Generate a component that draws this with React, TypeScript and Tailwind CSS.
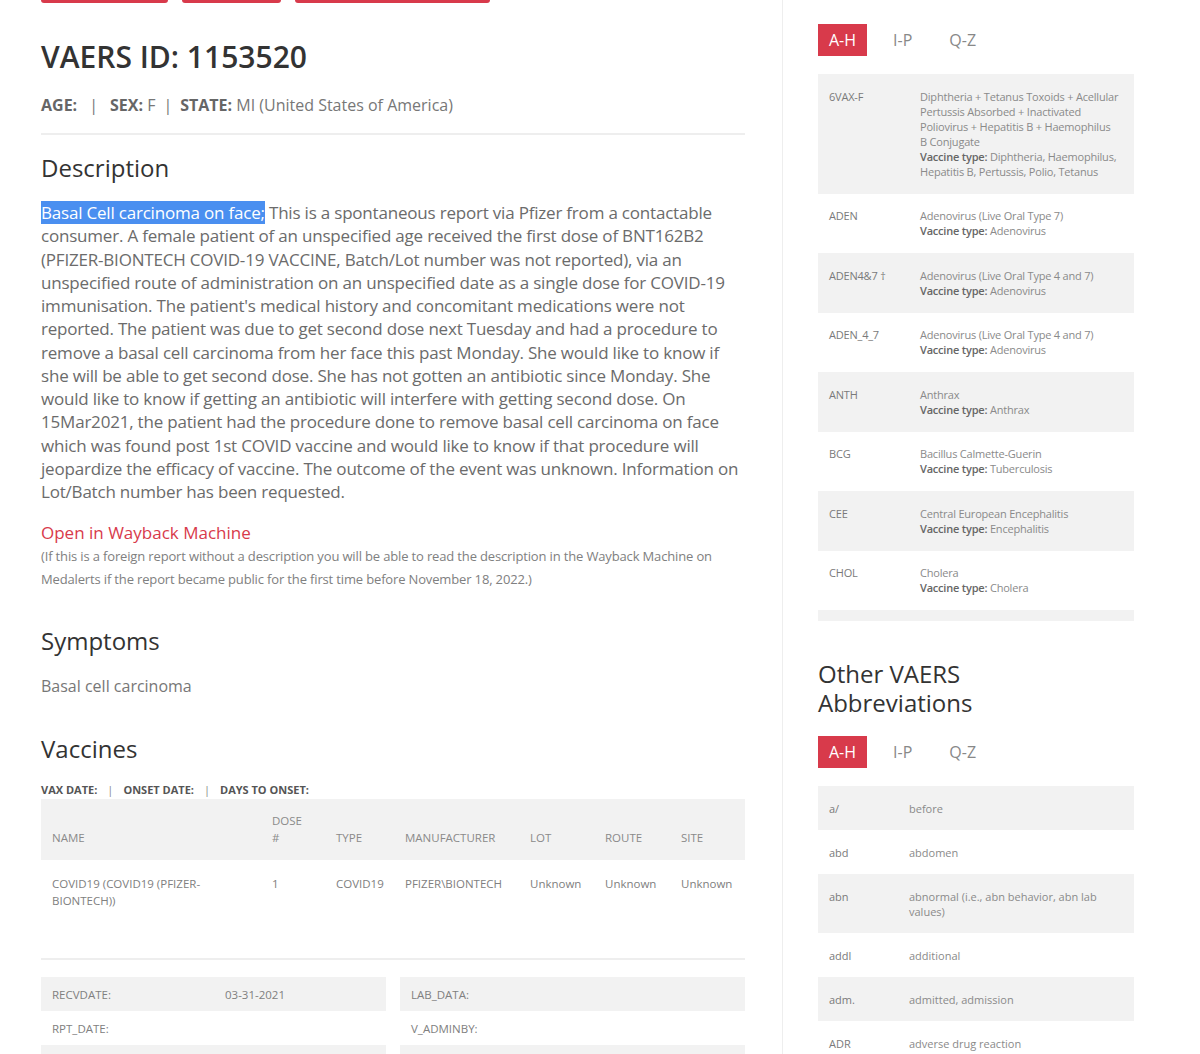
import React from "react";

const vaccineAbbr = [
  {
    code: "6VAX-F",
    name: "Diphtheria + Tetanus Toxoids + Acellular Pertussis Absorbed + Inactivated Poliovirus + Hepatitis B + Haemophilus B Conjugate",
    type: "Diphtheria, Haemophilus, Hepatitis B, Pertussis, Polio, Tetanus",
  },
  { code: "ADEN", name: "Adenovirus (Live Oral Type 7)", type: "Adenovirus" },
  { code: "ADEN4&7 †", name: "Adenovirus (Live Oral Type 4 and 7)", type: "Adenovirus" },
  { code: "ADEN_4_7", name: "Adenovirus (Live Oral Type 4 and 7)", type: "Adenovirus" },
  { code: "ANTH", name: "Anthrax", type: "Anthrax" },
  { code: "BCG", name: "Bacillus Calmette-Guerin", type: "Tuberculosis" },
  { code: "CEE", name: "Central European Encephalitis", type: "Encephalitis" },
  { code: "CHOL", name: "Cholera", type: "Cholera" },
  { code: "DF", name: "Dengue Fever", type: "Dengue" },
];

const otherAbbr = [
  { code: "a/", meaning: "before" },
  { code: "abd", meaning: "abdomen" },
  { code: "abn", meaning: "abnormal (i.e., abn behavior, abn lab values)" },
  { code: "addl", meaning: "additional" },
  { code: "adm.", meaning: "admitted, admission" },
  { code: "ADR", meaning: "adverse drug reaction" },
  { code: "AE", meaning: "adverse event" },
];

const fieldsLeft = [
  { label: "RECVDATE:", value: "03-31-2021" },
  { label: "RPT_DATE:", value: "" },
  { label: "DATEDIED:", value: "" },
];

const fieldsRight = [
  { label: "LAB_DATA:", value: "" },
  { label: "V_ADMINBY:", value: "" },
  { label: "V_FUNDBY:", value: "" },
];

function Tabs() {
  return (
    <div className="flex gap-[15px] h-[32px]">
      <button type="button" className="px-[11px] h-[32px] text-[16px] text-white bg-[#d83a4b]">
        A-H
      </button>
      <button type="button" className="px-[11px] h-[32px] text-[16px] text-[#888]">
        I-P
      </button>
      <button type="button" className="px-[11px] h-[32px] text-[16px] text-[#888]">
        Q-Z
      </button>
    </div>
  );
}

export default function App() {
  return (
    <div
      className="flex bg-white min-h-[1054px] overflow-hidden"
      style={{ fontFamily: '"Open Sans", "Liberation Sans", sans-serif' }}
    >
      {/* Main report */}
      <div className="w-[782px] shrink-0 pl-[41px] pr-[37px]">
        <div className="flex gap-[14px] h-[3px]">
          <div className="w-[127px] bg-[#d83a4b] rounded-b-[3px]" />
          <div className="w-[99px] bg-[#d83a4b] rounded-b-[3px]" />
          <div className="w-[195px] bg-[#d83a4b] rounded-b-[3px]" />
        </div>

        <h1 className="mt-[36px] text-[30px] leading-[36px] font-semibold text-[#333]">
          VAERS ID: 1153520
        </h1>
        <p className="mt-[18px] text-[16px] leading-[24px] text-[#777]">
          <b className="font-bold text-[#666]">AGE:</b>
          <span className="mx-[12px]">|</span>
          <b className="font-bold text-[#666]">SEX:</b> F
          <span className="mx-[8px]">|</span>
          <b className="font-bold text-[#666]">STATE:</b> MI (United States of America)
        </p>
        <div className="mt-[16px] h-[2px] bg-[#eeeeee]" />

        <h2 className="mt-[18px] text-[24px] leading-[30px] font-medium text-[#333]">Description</h2>
        <p className="mt-[18px] text-[17px] leading-[23.25px] tracking-[-0.2px] text-[#6b6b6b]">
          <span className="bg-[#4a8ff0] text-white">Basal Cell carcinoma on face;</span> This is a
          spontaneous report via Pfizer from a contactable consumer. A female patient of an
          unspecified age received the first dose of BNT162B2 (PFIZER-BIONTECH COVID-19 VACCINE,
          Batch/Lot number was not reported), via an unspecified route of administration on an
          unspecified date as a single dose for COVID-19 immunisation. The patient's medical history
          and concomitant medications were not reported. The patient was due to get second dose next
          Tuesday and had a procedure to remove a basal cell carcinoma from her face this past Monday.
          She would like to know if she will be able to get second dose. She has not gotten an
          antibiotic since Monday. She would like to know if getting an antibiotic will interfere
          with getting second dose. On 15Mar2021, the patient had the procedure done to remove basal
          cell carcinoma on face which was found post 1st COVID vaccine and would like to know if that
          procedure will jeopardize the efficacy of vaccine. The outcome of the event was unknown.
          Information on Lot/Batch number has been requested.
        </p>

        <a href="#" className="block mt-[18px] text-[17px] leading-[24px] text-[#d83a4b]">
          Open in Wayback Machine
        </a>
        <p className="text-[13px] leading-[23px] tracking-[-0.15px] text-[#808080]">
          (If this is a foreign report without a description you will be able to read the description
          in the Wayback Machine on Medalerts if the report became public for the first time before
          November 18, 2022.)
        </p>

        <h2 className="mt-[35px] text-[24px] leading-[30px] font-medium text-[#333]">Symptoms</h2>
        <p className="mt-[18px] text-[16px] leading-[24px] text-[#777]">Basal cell carcinoma</p>

        <h2 className="mt-[36px] text-[24px] leading-[30px] font-medium text-[#333]">Vaccines</h2>
        <p className="mt-[18px] text-[11px] leading-[16px] font-bold text-[#555] uppercase">
          VAX DATE:
          <span className="mx-[10px] font-normal text-[#888]">|</span>
          ONSET DATE:
          <span className="mx-[10px] font-normal text-[#888]">|</span>
          DAYS TO ONSET:
        </p>

        <table className="mt-[1px] w-full table-fixed text-left">
          <colgroup>
            <col className="w-[220px]" />
            <col className="w-[64px]" />
            <col className="w-[69px]" />
            <col className="w-[125px]" />
            <col className="w-[75px]" />
            <col className="w-[76px]" />
            <col className="w-[75px]" />
          </colgroup>
          <thead className="bg-[#f2f2f2]">
            <tr className="text-[11.5px] leading-[17px] text-[#8a8a8a] uppercase">
              <th className="align-bottom font-normal pl-[11px] pt-[12.5px] pb-[14.5px]">Name</th>
              <th className="align-bottom font-normal pl-[11px] pt-[12.5px] pb-[14.5px]">
                Dose
                <br />#
              </th>
              <th className="align-bottom font-normal pl-[11px] pt-[12.5px] pb-[14.5px]">Type</th>
              <th className="align-bottom font-normal pl-[11px] pt-[12.5px] pb-[14.5px]">Manufacturer</th>
              <th className="align-bottom font-normal pl-[11px] pt-[12.5px] pb-[14.5px]">Lot</th>
              <th className="align-bottom font-normal pl-[11px] pt-[12.5px] pb-[14.5px]">Route</th>
              <th className="align-bottom font-normal pl-[11px] pt-[12.5px] pb-[14.5px]">Site</th>
            </tr>
          </thead>
          <tbody>
            <tr className="text-[11.5px] leading-[17px] text-[#808080]">
              <td className="align-top pl-[11px] pr-[11px] pt-[14.5px] pb-[14.5px]">
                COVID19 (COVID19 (PFIZER-BIONTECH))
              </td>
              <td className="align-top pl-[11px] pt-[14.5px]">1</td>
              <td className="align-top pl-[11px] pt-[14.5px]">COVID19</td>
              <td className="align-top pl-[11px] pt-[14.5px]">PFIZER\BIONTECH</td>
              <td className="align-top pl-[11px] pt-[14.5px]">Unknown</td>
              <td className="align-top pl-[11px] pt-[14.5px]">Unknown</td>
              <td className="align-top pl-[11px] pt-[14.5px]">Unknown</td>
            </tr>
          </tbody>
        </table>

        <div className="mt-[35px] h-[2px] bg-[#eeeeee]" />

        <div className="mt-[17px] grid grid-cols-2 gap-x-[14px]">
          {[fieldsLeft, fieldsRight].map((col, ci) => (
            <div key={ci} className="flex flex-col">
              {col.map((f, i) => (
                <div
                  key={f.label}
                  className={`flex h-[34px] items-center pl-[11px] text-[11.5px] text-[#808080] ${
                    i % 2 === 0 ? "bg-[#f2f2f2]" : "bg-white"
                  }`}
                >
                  <span className="w-[173px] shrink-0">{f.label}</span>
                  <span>{f.value}</span>
                </div>
              ))}
            </div>
          ))}
        </div>
      </div>

      {/* Sidebar */}
      <aside className="w-[352px] shrink-0 border-l border-[#eeeeee] pl-[35px]">
        <div className="mt-[24px]">
          <Tabs />
        </div>
        <div className="mt-[18px] h-[547px] overflow-hidden">
          {vaccineAbbr.map((v, i) => (
            <div
              key={v.code}
              className={`flex py-[14.75px] pl-[11px] pr-[15px] text-[11px] leading-[15px] tracking-[-0.2px] ${
                i % 2 === 0 ? "bg-[#f2f2f2]" : "bg-white"
              }`}
            >
              <div className="w-[91px] shrink-0 text-[#7a7a7a]">{v.code}</div>
              <div className="text-[#8a8a8a]">
                {v.name}
                <br />
                <b className="font-semibold text-[#666]">Vaccine type:</b> {v.type}
              </div>
            </div>
          ))}
        </div>

        <h2 className="mt-[37.5px] max-w-[230px] text-[24px] leading-[29px] font-medium text-[#333]">
          Other VAERS Abbreviations
        </h2>
        <div className="mt-[19.5px]">
          <Tabs />
        </div>
        <div className="mt-[18px]">
          {otherAbbr.map((a, i) => (
            <div
              key={a.code}
              className={`flex py-[14.5px] pl-[11px] pr-[12px] text-[11px] leading-[15px] ${
                i % 2 === 0 ? "bg-[#f2f2f2]" : "bg-white"
              }`}
            >
              <div className="w-[80px] shrink-0 text-[#7a7a7a]">{a.code}</div>
              <div className="text-[#8a8a8a]">{a.meaning}</div>
            </div>
          ))}
        </div>
      </aside>
    </div>
  );
}
